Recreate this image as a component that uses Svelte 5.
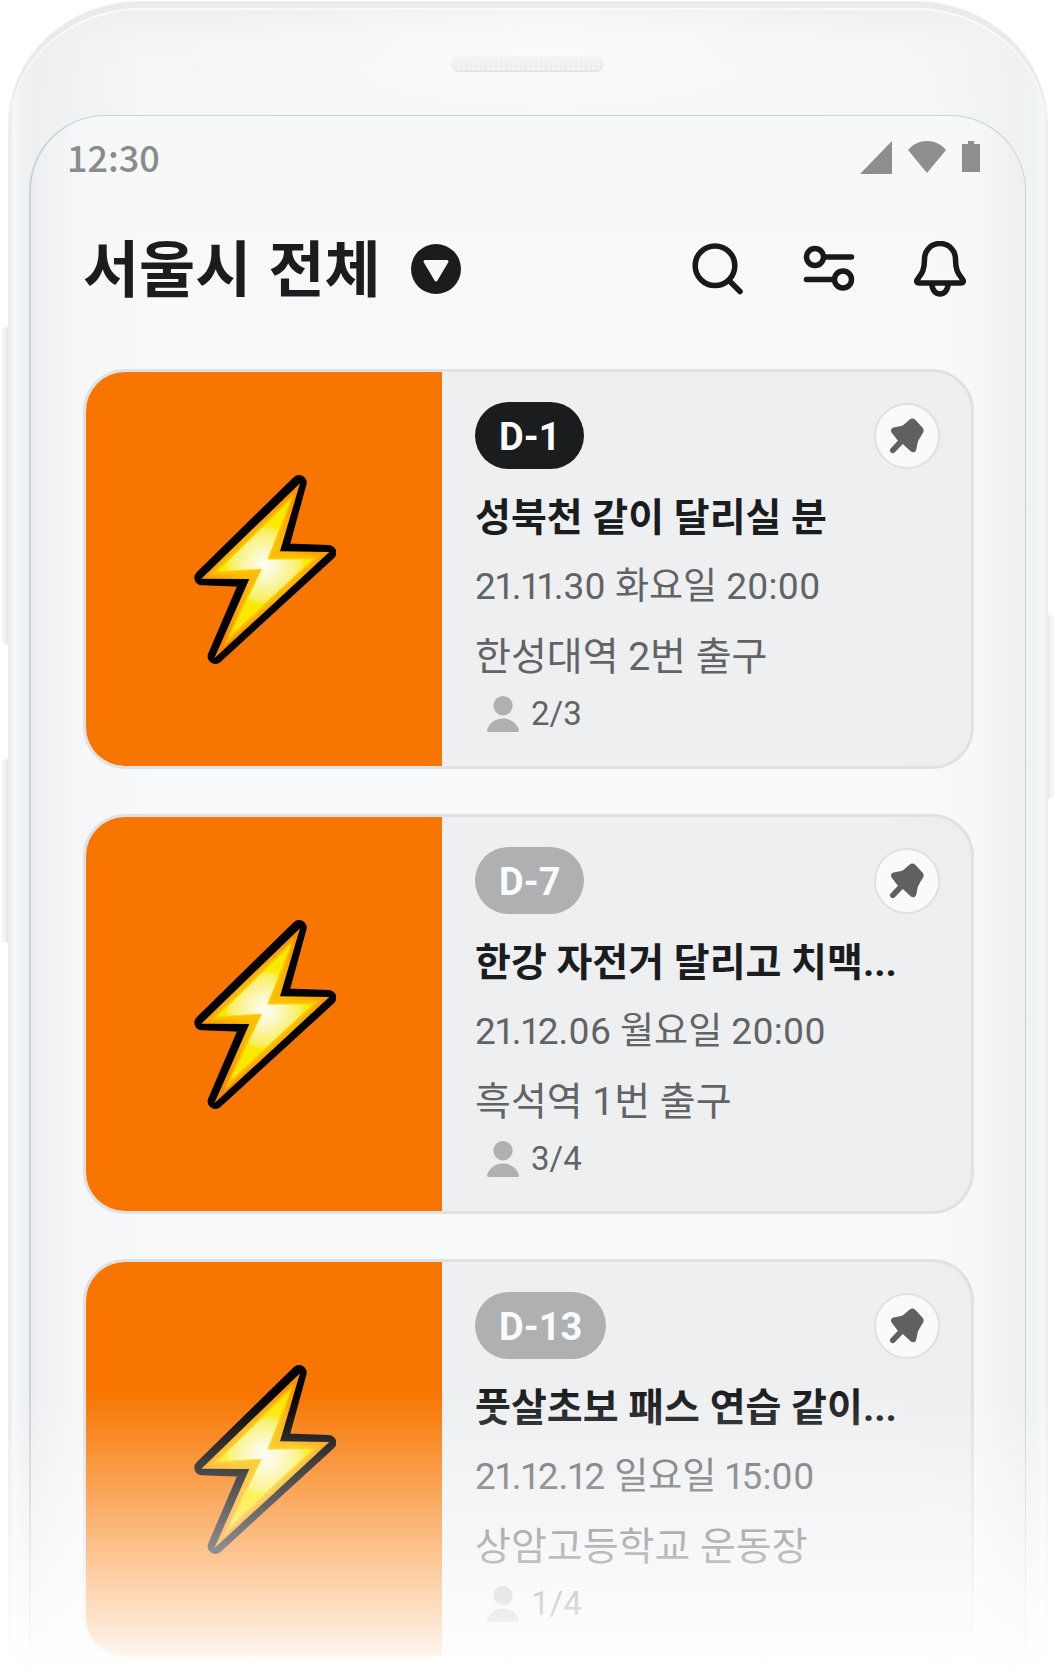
<script>
  const meetups = [
    { dday: 'D-1', soon: true, title: '성북천 같이 달리실 분', date: '21.11.30 화요일 20:00', place: '한성대역 2번 출구', count: '2/3' },
    { dday: 'D-7', soon: false, title: '한강 자전거 달리고 치맥...', date: '21.12.06 월요일 20:00', place: '흑석역 1번 출구', count: '3/4' },
    { dday: 'D-13', soon: false, title: '풋살초보 패스 연습 같이...', date: '21.12.12 일요일 15:00', place: '상암고등학교 운동장', count: '1/4' }
  ];
</script>

<div class="stage" lang="ko">
  <span class="key volume"></span>
  <span class="key assistant"></span>
  <span class="key power"></span>

  <div class="phone">
    <div class="bezel"><span class="speaker"></span></div>

    <main class="screen">
      <div class="status">
        <time lang="en">12:30</time>
        <div class="indicators">
          <svg width="32" height="34" viewBox="0 0 32 34" aria-hidden="true"><path d="M0 34 32 1v33z" /></svg>
          <svg width="38" height="34" viewBox="0 0 38 34" aria-hidden="true"><path d="M19 33 0 10C10-2 28-2 38 10z" /></svg>
          <svg width="18" height="34" viewBox="0 0 18 34" aria-hidden="true"><path d="M6 1h6v3h6v28H0V4h6z" /></svg>
        </div>
      </div>

      <header>
        <h1>서울시 전체</h1>
        <button class="region" aria-label="지역 선택">
          <svg width="50" height="50" viewBox="0 0 50 50">
            <circle cx="25" cy="25" r="25" fill="#1b1c1c" />
            <path d="M14 17.500h22L25 36z" fill="#f7f9f8" stroke="#f7f9f8" stroke-width="3" stroke-linejoin="round" />
          </svg>
        </button>
        <nav>
          <button aria-label="검색">
            <svg class="line" width="56" height="56" viewBox="0 0 56 56">
              <circle cx="25" cy="24.700" r="19.800" />
              <path d="m39.500 40 10.500 10.500" />
            </svg>
          </button>
          <button aria-label="필터">
            <svg class="line" width="56" height="56" viewBox="0 0 56 56">
              <circle cx="14" cy="16" r="8.500" />
              <path d="M23 16h27.500M5.500 38.500H33" />
              <circle cx="42" cy="38.500" r="8.500" />
            </svg>
          </button>
          <button aria-label="알림">
            <svg class="line" width="56" height="56" viewBox="-2 0 56 56">
              <path d="M26 2.500c-9 0-15.500 7-15.500 16 0 14-5 15.500-7.600 20.800-.6 1.600.2 2.700 1.800 2.700h42.600c1.600 0 2.400-1.100 1.800-2.700-2.600-5.300-7.600-6.800-7.600-20.800 0-9-6.500-16-15.500-16z" />
              <path d="M18 43c0 6 3.500 10 8 10s8-4 8-10" />
            </svg>
          </button>
        </nav>
      </header>

      <ul class="list">
        {#each meetups as m}
          <li class="card">
            <div class="thumb">
              <svg width="142" height="190" viewBox="102 102 426 570" aria-hidden="true">
                <defs>
                  <radialGradient id="edge" gradientUnits="userSpaceOnUse" cx="315" cy="375" r="270">
                    <stop offset="0.300" stop-color="#fbb900" />
                    <stop offset="1" stop-color="#ff8600" />
                  </radialGradient>
                  <radialGradient id="core" gradientUnits="userSpaceOnUse" cx="315" cy="375" r="240">
                    <stop offset="0" stop-color="#fffef8" />
                    <stop offset="0.200" stop-color="#fbf7bd" />
                    <stop offset="0.440" stop-color="#f8ef5e" />
                    <stop offset="0.500" stop-color="#f9ea00" />
                    <stop offset="0.850" stop-color="#fbe800" />
                  </radialGradient>
                </defs>
                <path d="M417 128 361 333 506 338 166 649 265 418 126 413z" fill="#000" stroke="#000" stroke-width="46" stroke-linejoin="round" />
                <path d="M420 130 360 334 508 336 163 655 268 417 124 416z" fill="url(#edge)" />
                <path d="M402 160 340 346 482 346 190 620 288 402 148 405z" fill="#fcc400" opacity="0.750" />
                <path d="M393 178 324 357 460 357 208 590 304 388 170 395z" fill="url(#core)" stroke="#fdd800" stroke-width="3" />
              </svg>
            </div>
            <div class="body">
              <div class="top">
                <span class="badge" class:soon={m.soon}>{m.dday}</span>
                <button class="pin" aria-label="고정">
                  <svg width="36" height="36" viewBox="0 0 36 36">
                    <path d="M20.700 1.600C22.200.2 24.400.1 26 1.600l7.600 8.200c1.300 1.600 1.400 3.300.3 5l-4.400 7.400c-1.500 3-1.300 6.500-2.300 9.600-.9 2.700-3.400 3.400-5.600 1.500L13.800 26l-8.200 8.600C3.200 36.600-.4 33.600 1.200 31l7.700-8.200-6.300-8.300c-1.300-2.300-.4-4.400 2-5 3.200-.8 7-.6 9.800-2.400z" />
                  </svg>
                </button>
              </div>
              <h2>{m.title}</h2>
              <p class="date">{m.date}</p>
              <p class="place">{m.place}</p>
              <p class="count">
                <svg width="32" height="36" viewBox="0 0 32 36" aria-hidden="true">
                  <circle cx="16" cy="9.700" r="9.700" />
                  <path d="M1.500 36C-.3 36 0 34.300.4 33 3 26.500 9 22.500 16 22.500S29 26.500 31.600 33c.4 1.300.7 3-1.100 3z" />
                </svg>
                <span>{m.count}</span>
              </p>
            </div>
          </li>
        {/each}
      </ul>
    </main>
  </div>

  <div class="fade"></div>
</div>

<style>
  :global(body) {
    margin: 0;
    background: #fff;
  }

  .stage {
    position: relative;
    min-height: 100vh;
    overflow: hidden;
    display: flex;
    padding: 1px 8px 0;
    box-sizing: border-box;
    font-family: Roboto, 'Noto Sans CJK KR', sans-serif;
    color: #1b1c1e;
  }

  .key {
    position: absolute;
    left: 1px;
    width: 8px;
    border-radius: 6px 0 0 6px;
    background: linear-gradient(90deg, #fbfbfb, #eeefef 60%, #dfe1e1);
  }
  .volume {
    top: 327px;
    height: 318px;
  }
  .assistant {
    top: 759px;
    height: 184px;
  }
  .power {
    top: 615px;
    left: auto;
    right: 1px;
    height: 184px;
    border-radius: 0 6px 6px 0;
    background: linear-gradient(270deg, #fafafa, #f0f1f1 60%, #e3e5e5);
  }

  .phone {
    position: relative;
    flex: 1;
    min-width: 0;
    display: flex;
    flex-direction: column;
    padding: 0 22px 0 21px;
    border-radius: 132px 132px 0 0 / 124px 124px 0 0;
    background:
      linear-gradient(90deg, #e9ebeb 0, #eceeef 3px, #f6f8f9 5px, #f0f2f3 12px, rgba(236, 238, 240, 0.9) 26px, rgba(240, 242, 244, 0) 130px, rgba(240, 242, 244, 0) calc(100% - 120px), rgba(238, 240, 241, 0.9) calc(100% - 26px), #f1f4f4 calc(100% - 10px), #f6f8f8 calc(100% - 5px), #eceeee 100%),
      radial-gradient(ellipse 380px 90px at 52% 60px, #fafbfd, rgba(250, 251, 253, 0)),
      linear-gradient(#e9eaeb 0, #eff0f1 14px, #f3f5f6 40px, #f4f6f7 115px);
    box-shadow: inset 0 1px 1px #eff0f0, inset 0 7px 1px #e9eaeb, inset 0 9px 1px #fafbfb;
  }

  .bezel {
    height: 114px;
    display: flex;
    justify-content: center;
    align-items: flex-start;
    padding-top: 55px;
    box-sizing: border-box;
  }
  .speaker {
    width: 153px;
    height: 16px;
    border-radius: 8px;
    background:
      radial-gradient(circle, #f4f5f6 1px, rgba(244, 245, 246, 0) 2px) 0 0 / 5px 5px,
      linear-gradient(#f3f4f6, #e9eaec);
    box-shadow: inset 0 -1px 1px #dfe0e2;
  }

  .screen {
    flex: 1;
    border: solid #c8d3d8;
    border-width: 1px 1px 0 2px;
    border-radius: 76px 76px 0 0;
    background:
      linear-gradient(90deg, #edeef1 0, #f2f3f5 24px, #f6f7f9 52px, rgba(248, 249, 251, 0) 130px, rgba(248, 249, 251, 0) calc(100% - 110px), #f6f8f9 calc(100% - 52px), #f1f3f3 calc(100% - 22px), #eef0f0 100%),
      linear-gradient(#f7f9f8, #f8f9fb 360px);
  }

  .status {
    height: 82px;
    display: flex;
    justify-content: space-between;
    align-items: center;
    padding: 0 45px 0 36px;
    color: #8a8b8b;
  }
  time {
    padding-bottom: 2px;
    font: 500 36px/48px 'Noto Sans CJK JP', sans-serif;
  }
  .indicators {
    display: flex;
    gap: 16px;
    fill: #8d8e8e;
  }

  header {
    height: 142px;
    display: flex;
    align-items: center;
    padding: 0 57px 0 52px;
  }
  h1 {
    margin: 0 30px 0 0;
    padding-bottom: 6px;
    font: 700 61px/80px 'Noto Sans CJK KR', sans-serif;
    color: #1b1c1c;
  }
  button {
    display: flex;
    align-items: center;
    justify-content: center;
    padding: 0;
    border: 0;
    background: none;
    cursor: pointer;
  }
  nav {
    display: flex;
    gap: 55px;
    margin-left: auto;
  }
  .line {
    fill: none;
    stroke: #17191a;
    stroke-width: 5.5;
    stroke-linecap: round;
    stroke-linejoin: round;
  }

  .list {
    display: grid;
    gap: 45px;
    margin: 0;
    padding: 29px 51px 16px 52px;
    list-style: none;
  }
  .card {
    display: grid;
    grid-template-columns: 356px 1fr;
    height: 400px;
    box-sizing: border-box;
    border: 3px solid #dfe2e4;
    border-radius: 42px;
    background: linear-gradient(90deg, #eeeff1 85%, #edefee);
    overflow: hidden;
  }
  .thumb {
    display: flex;
    align-items: center;
    justify-content: center;
    padding-left: 2px;
    background: #f87600;
  }
  .body {
    min-width: 0;
    padding: 30px 31px 0 33px;
  }
  .top {
    display: flex;
    justify-content: space-between;
    align-items: center;
    margin-bottom: 15px;
  }
  .badge {
    min-width: 109px;
    height: 67px;
    padding: 2px 24px 0;
    box-sizing: border-box;
    border-radius: 34px;
    background: #afb0b2;
    color: #fafbfd;
    font-size: 38px;
    font-weight: 700;
    line-height: 67px;
  }
  .badge.soon {
    background: #1b1c1e;
  }
  .pin {
    width: 66px;
    height: 66px;
    border: 2px solid #dfe0e2;
    border-radius: 50%;
    background: #f9fafc;
    fill: #5f6062;
  }
  h2,
  p {
    margin: 0;
    white-space: nowrap;
    line-height: 70px;
  }
  h2 {
    font-size: 39px;
    font-weight: 700;
    line-height: 68px;
    overflow: hidden;
    text-overflow: ellipsis;
  }
  p {
    color: #626365;
  }
  .date {
    font-size: 37px;
    font-weight: 400;
    font-variant-numeric: proportional-nums;
  }
  .place {
    font-size: 39px;
  }
  .count {
    display: flex;
    align-items: center;
    gap: 12px;
    padding-left: 12px;
    font-size: 33px;
    line-height: 44px;
  }
  .count svg {
    fill: #afb0b2;
  }

  .fade {
    position: absolute;
    inset: auto 0 0;
    height: 284px;
    background: linear-gradient(rgba(255, 255, 255, 0), #fff);
    pointer-events: none;
  }
</style>
